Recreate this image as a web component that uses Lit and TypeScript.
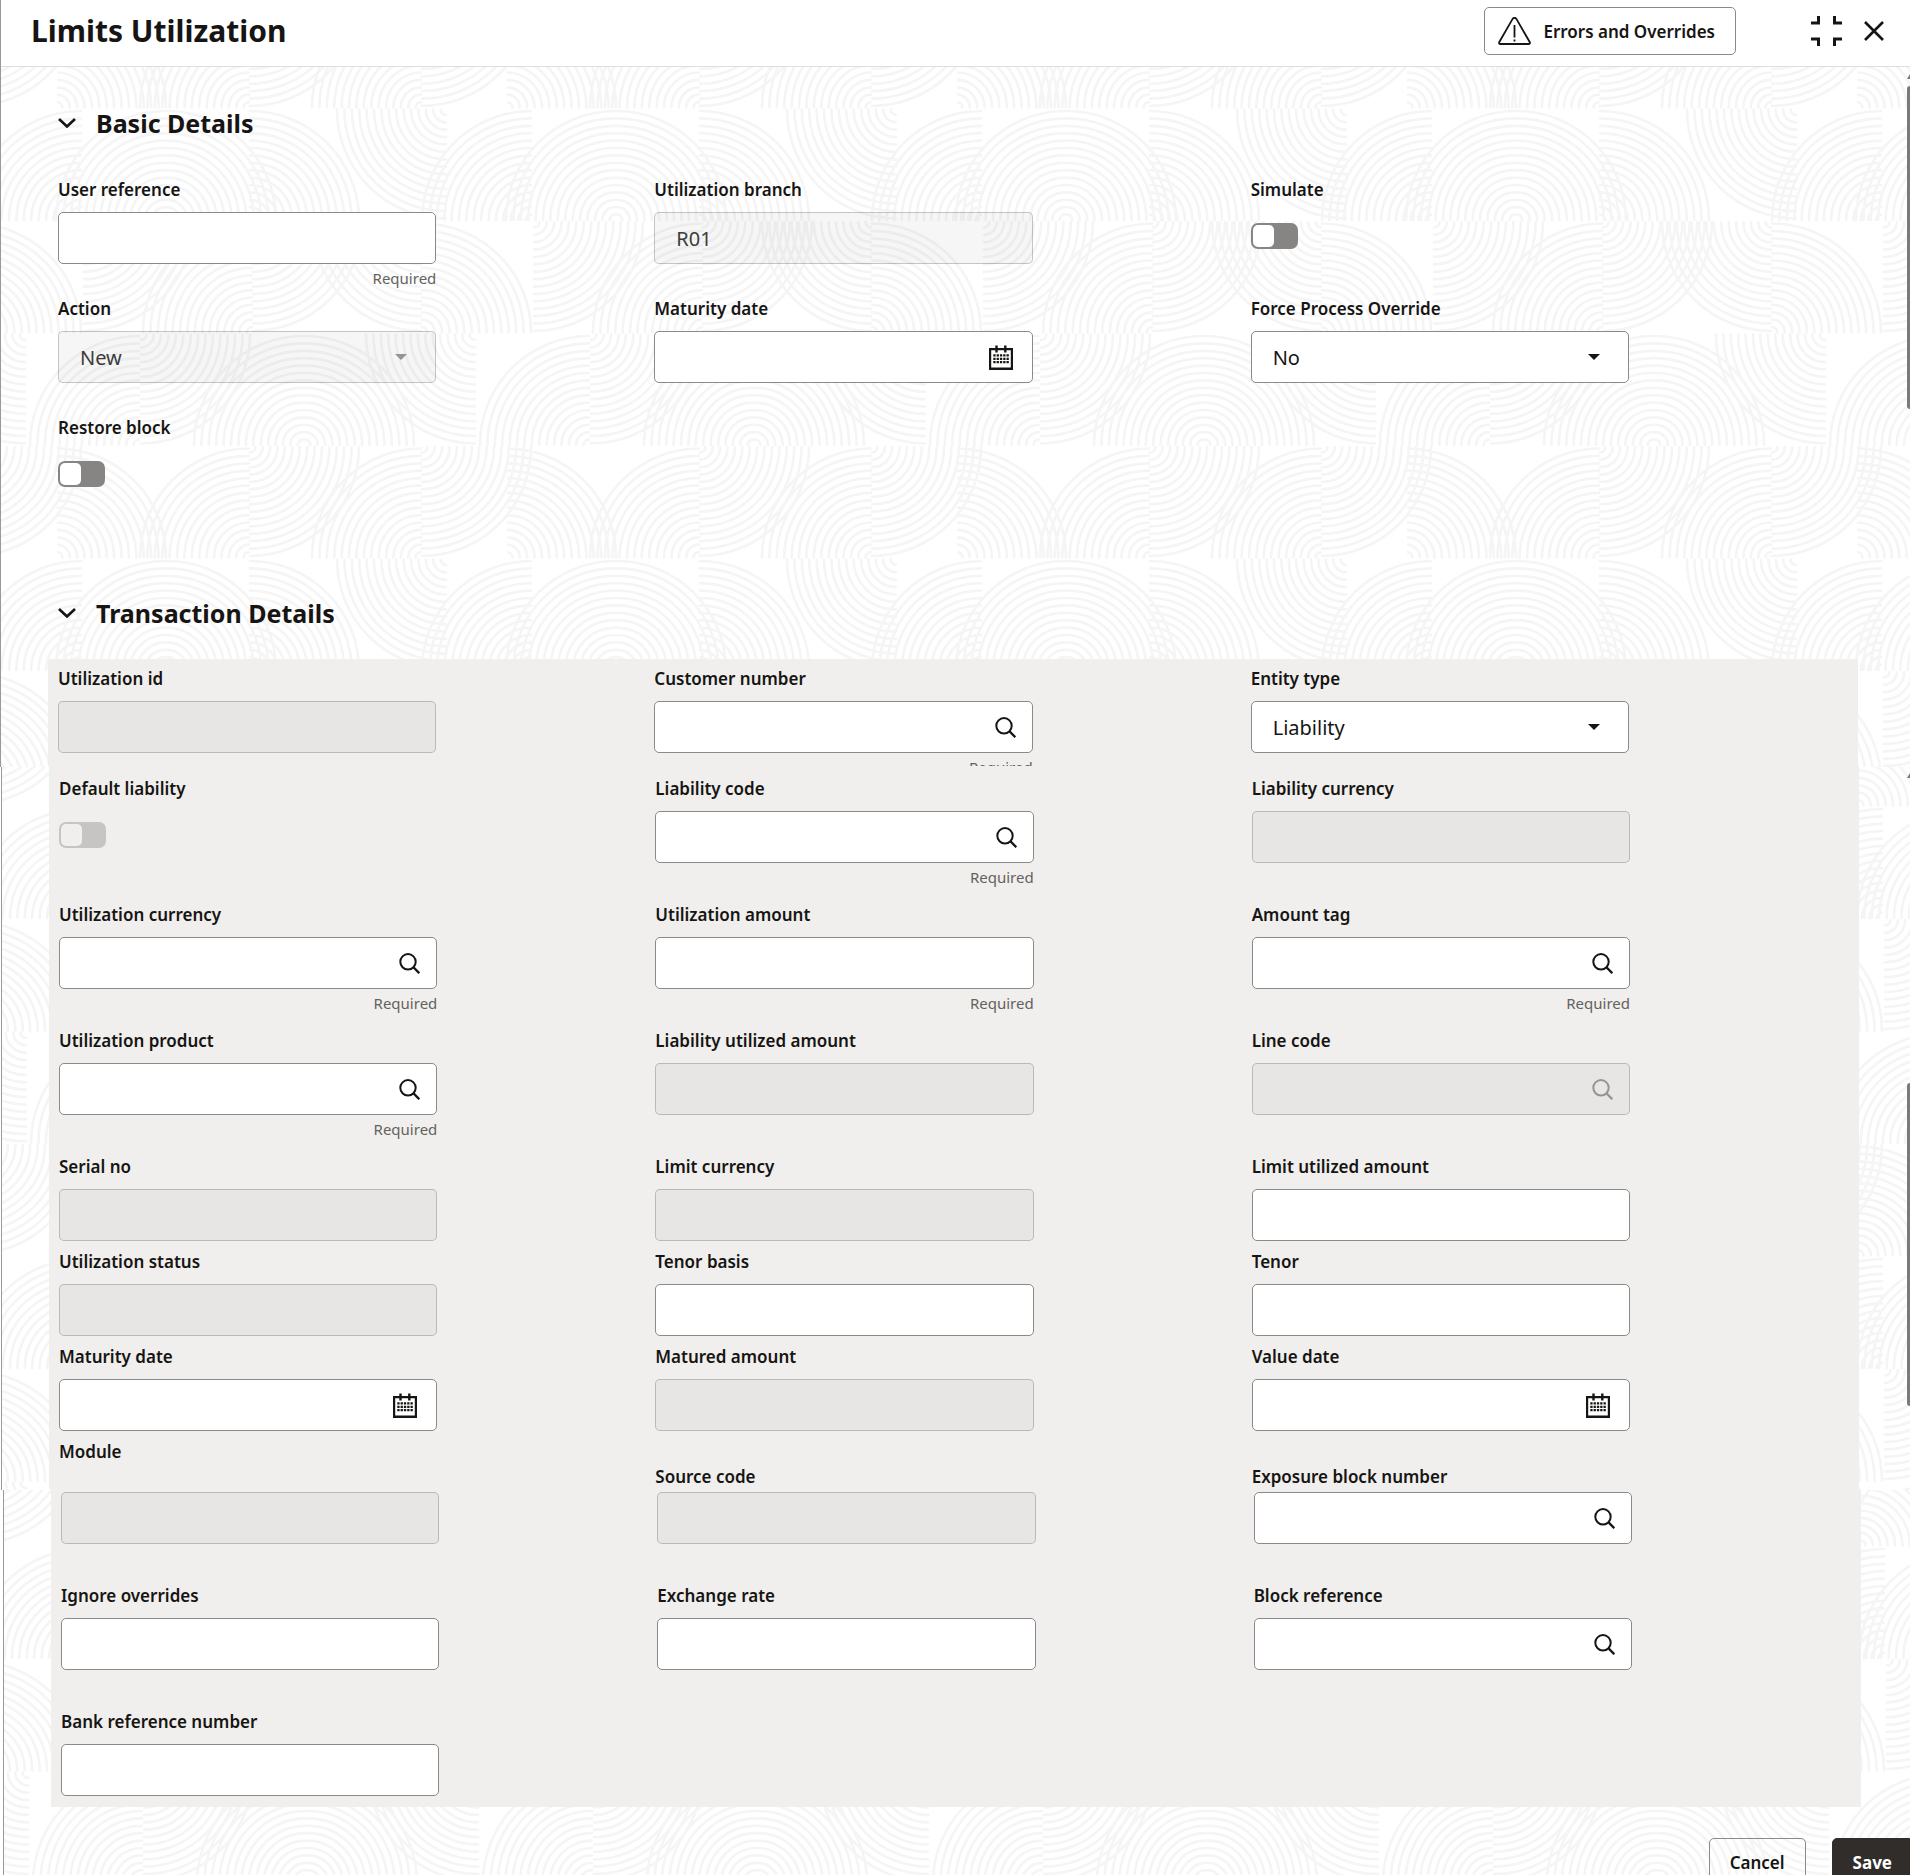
import { LitElement, html, svg, css, nothing } from "lit";
import { customElement } from "lit/decorators.js";
import { classMap } from "lit/directives/class-map.js";

type Kind = "text" | "search" | "date" | "select" | "switch";

interface Field {
  id: string;
  label: string;
  kind?: Kind;
  value?: string;
  disabled?: boolean;
  required?: boolean;
}

const basicRows: Field[][] = [
  [
    { id: "user-reference", label: "User reference", required: true },
    { id: "utilization-branch", label: "Utilization branch", value: "R01", disabled: true },
    { id: "simulate", label: "Simulate", kind: "switch" },
  ],
  [
    { id: "action", label: "Action", kind: "select", value: "New", disabled: true },
    { id: "basic-maturity-date", label: "Maturity date", kind: "date" },
    { id: "force-override", label: "Force Process Override", kind: "select", value: "No" },
  ],
  [{ id: "restore-block", label: "Restore block", kind: "switch" }],
];

const entityRow: Field[] = [
  { id: "utilization-id", label: "Utilization id", disabled: true },
  { id: "customer-number", label: "Customer number", kind: "search", required: true },
  { id: "entity-type", label: "Entity type", kind: "select", value: "Liability" },
];

const roomyRows: Field[][] = [
  [
    { id: "default-liability", label: "Default liability", kind: "switch", disabled: true },
    { id: "liability-code", label: "Liability code", kind: "search", required: true },
    { id: "liability-currency", label: "Liability currency", disabled: true },
  ],
  [
    { id: "utilization-currency", label: "Utilization currency", kind: "search", required: true },
    { id: "utilization-amount", label: "Utilization amount", required: true },
    { id: "amount-tag", label: "Amount tag", kind: "search", required: true },
  ],
  [
    { id: "utilization-product", label: "Utilization product", kind: "search", required: true },
    { id: "liability-utilized", label: "Liability utilized amount", disabled: true },
    { id: "line-code", label: "Line code", kind: "search", disabled: true },
  ],
];

const compactRows: Field[][] = [
  [
    { id: "serial-no", label: "Serial no", disabled: true },
    { id: "limit-currency", label: "Limit currency", disabled: true },
    { id: "limit-utilized", label: "Limit utilized amount" },
  ],
  [
    { id: "utilization-status", label: "Utilization status", disabled: true },
    { id: "tenor-basis", label: "Tenor basis" },
    { id: "tenor", label: "Tenor" },
  ],
  [
    { id: "maturity-date", label: "Maturity date", kind: "date" },
    { id: "matured-amount", label: "Matured amount", disabled: true },
    { id: "value-date", label: "Value date", kind: "date" },
  ],
];

const sourceRow: Field[] = [
  { id: "module", label: "Module", disabled: true },
  { id: "source-code", label: "Source code", disabled: true },
  { id: "exposure-block", label: "Exposure block number", kind: "search" },
];

const overrideRow: Field[] = [
  { id: "ignore-overrides", label: "Ignore overrides" },
  { id: "exchange-rate", label: "Exchange rate" },
  { id: "block-reference", label: "Block reference", kind: "search" },
];

const bankRow: Field[] = [{ id: "bank-reference", label: "Bank reference number" }];

/* Backdrop tile: quarter fans as [centre x, row, horizontal direction, vertical direction]. */
const TILE = 450;
const ROW = TILE / 4;
const fans: [number, number, number, number][] = [
  [0, 0, 1, -1],
  [192, 0, -1, -1],
  [193, 0, 1, 1],
  [364, 0, -1, -1],
  [365, 0, 1, 1],
  [24, 1, -1, -1],
  [108, 1, -1, -1],
  [110, 1, 1, -1],
  [193, 1, 1, -1],
  [389, 1, -1, 1],
  [27, 2, 1, 1],
  [195, 2, -1, -1],
  [196, 2, 1, 1],
  [364, 2, -1, 1],
  [365, 2, 1, -1],
  [82, 3, -1, -1],
  [84, 3, 1, 1],
  [246, 3, -1, -1],
  [248, 3, 1, -1],
  [418, 3, -1, 1],
];

function fanPath(cx: number, row: number, dx: number, dy: number): string {
  const cy = dy < 0 ? (row + 1) * ROW - 1 : row * ROW + 1;
  const sweep = dx * dy > 0 ? 1 : 0;
  let d = "";
  for (let i = 0; i < 15; i++) {
    const r = 109 - i * 7.4;
    d += `M${cx + dx * r} ${cy}A${r} ${r} 0 0 ${sweep} ${cx} ${cy + dy * r}`;
  }
  return d;
}

const tilePath = fans
  .flatMap(([x, row, dx, dy]) =>
    [x - TILE, x, x + TILE]
      .filter((c) => (dx > 0 ? c + 110 > 0 && c < TILE : c > 0 && c - 110 < TILE))
      .map((c) => fanPath(c, row, dx, dy)),
  )
  .join("");

const bands = [
  { id: "band-a", x: 57, y: -4, top: 0, edge: 0 },
  { id: "band-b", x: 58, y: 694, top: 767, edge: 1 },
  { id: "band-c", x: 60, y: 1434, top: 1490, edge: 3 },
];

const searchIcon = html`<svg class="icon icon--search" viewBox="0 0 21 21" aria-hidden="true">
  <circle cx="9" cy="8.8" r="7.7" fill="none" stroke="currentColor" stroke-width="2" />
  <path d="M14.2 14 20.3 20.2" stroke="currentColor" stroke-width="2.4" />
</svg>`;

const calendarIcon = html`<svg class="icon icon--date" viewBox="0 0 24 25" aria-hidden="true">
  <path fill="currentColor" fill-rule="evenodd" d="M0 3H24V25H0ZM2.2 5.2V22.4H21.8V5.2Z" />
  <path d="M7.5 0.5V7.5M16.3 0.5V7.5" stroke="currentColor" stroke-width="2.4" />
  <path
    d="M4.3 10.4H20M4.3 13.8H20M4.3 17.2H20"
    stroke="currentColor"
    stroke-width="2.3"
    stroke-dasharray="2.3 1"
  />
</svg>`;

const caretIcon = html`<svg class="icon icon--caret" viewBox="0 0 12 6" aria-hidden="true">
  <path d="M0 0H12L6 6Z" fill="currentColor" />
</svg>`;

const chevronIcon = html`<svg class="chevron" viewBox="0 0 18 10" aria-hidden="true">
  <path d="M1 1 9 8.5 17 1" fill="none" stroke="currentColor" stroke-width="2.6" />
</svg>`;

@customElement("app-root")
export class AppRoot extends LitElement {
  static styles = css`
    :host {
      display: block;
      position: relative;
      height: 100vh;
      overflow: hidden;
      background: #fff;
      color: #161513;
      font-family: "Noto Sans", "Open Sans", sans-serif;
      --edge: #8b8a88;
      --shade: rgba(22, 21, 19, 0.04);
    }
    * {
      box-sizing: border-box;
    }
    .backdrop {
      position: absolute;
      inset: 0;
      width: 100%;
      height: 100%;
    }
    .scroll {
      position: absolute;
      right: 0;
      display: flex;
      flex-direction: column;
      gap: 7px;
      width: 3px;
      overflow: hidden;
    }
    .scroll::before {
      content: "";
      width: 6px;
      height: 5px;
      background: #7b7a78;
      clip-path: polygon(50% 0, 100% 100%, 0 100%);
    }
    .scroll--upper {
      top: 74px;
    }
    .scroll--lower {
      top: 773px;
    }
    .thumb {
      height: 323px;
      border-radius: 3px 0 0 3px;
      background: #7b7a78;
    }
    .scroll--lower .thumb {
      margin-top: 298px;
    }
    .header {
      position: relative;
      display: flex;
      align-items: center;
      height: 67px;
      padding: 0 26px 4px 30px;
      margin-left: 1px;
      background: #fff;
      border-bottom: 1px solid #dfdedd;
    }
    h1,
    h2 {
      margin: 0;
      font-weight: 700;
    }
    h1 {
      flex: 1;
      font-size: 30px;
      line-height: 40px;
    }
    button {
      font: inherit;
      color: inherit;
      background: none;
      border: 0;
      padding: 0;
      cursor: pointer;
    }
    .outlined,
    .solid {
      height: 48px;
      border: 1px solid var(--edge);
      border-radius: 5px;
      font-size: 17px;
      font-weight: 600;
    }
    .errors {
      display: flex;
      align-items: center;
      gap: 12px;
      padding: 0 20px 0 13px;
    }
    .warning {
      width: 33px;
      height: 28px;
    }
    .window {
      display: flex;
      align-items: center;
      gap: 22px;
      margin-left: 75px;
    }
    .window button {
      display: flex;
    }
    .shrink {
      width: 31px;
      height: 30px;
    }
    .close {
      width: 20px;
      height: 20px;
    }
    .body {
      position: relative;
    }
    .toggle-heading {
      display: flex;
      align-items: center;
      gap: 20px;
      margin-left: 58px;
      font-weight: 700;
      font-size: 25px;
      line-height: 36px;
    }
    .heading--basic {
      padding-top: 38px;
      padding-bottom: 37px;
    }
    .heading--transaction {
      padding-top: 60px;
      padding-bottom: 28px;
    }
    .chevron {
      width: 18px;
      height: 10px;
    }
    .group {
      margin: 0 52px 0 48px;
      padding: 0 11px 0 10px;
    }
    .panel {
      background: #f0efed;
    }
    .panel--top {
      padding-top: 8px;
      height: 107px;
      overflow: hidden;
    }
    .panel--middle {
      padding-top: 11px;
      margin: 0 51px 0 49px;
    }
    .panel--bottom {
      padding-top: 3px;
      padding-bottom: 11px;
      margin: 0 49px 0 51px;
    }
    .row {
      display: grid;
      grid-template-columns: repeat(3, 1fr);
      min-height: 95px;
    }
    .row--basic {
      min-height: 119px;
    }
    .row--roomy {
      min-height: 126px;
    }
    .row--labels {
      min-height: 49px;
    }
    .row--labels .label:not(:first-child) {
      align-self: end;
    }
    .row--controls {
      min-height: 92px;
    }
    .row--last {
      min-height: 86px;
    }
    .field {
      padding-right: 218px;
    }
    .label {
      display: block;
      font-size: 17px;
      font-weight: 600;
      line-height: 24px;
      white-space: nowrap;
    }
    .field .label {
      margin-bottom: 10px;
    }
    .control {
      display: grid;
      align-items: center;
    }
    .control > * {
      grid-area: 1 / 1;
    }
    .input {
      width: 100%;
      height: 52px;
      margin: 0;
      padding: 0 21px;
      border: 1px solid var(--edge);
      border-radius: 5px;
      background: #fff;
      color: #161513;
      font: inherit;
      font-size: 20px;
      appearance: none;
      outline: none;
    }
    .input:disabled {
      border-color: rgba(22, 21, 19, 0.22);
      background: var(--shade);
      color: #3d3c3a;
      opacity: 1;
    }
    .icon {
      justify-self: end;
      pointer-events: none;
    }
    .icon--search {
      width: 21px;
      height: 21px;
      margin-right: 17px;
    }
    .icon--date {
      width: 24px;
      height: 25px;
      margin-right: 20px;
    }
    .icon--caret {
      width: 12px;
      height: 6px;
      margin-right: 29px;
    }
    .control--disabled .icon {
      color: #959492;
    }
    .hint {
      margin-top: 3px;
      font-size: 15px;
      line-height: 23px;
      color: #64625f;
      text-align: right;
    }
    .switch {
      display: flex;
      align-items: center;
      width: 47px;
      height: 26px;
      margin: 21px 0 0;
      padding: 2px;
      appearance: none;
      border-radius: 7px;
      background: #868583;
    }
    .switch::before {
      content: "";
      width: 21px;
      height: 22px;
      border-radius: 5px;
      background: #fff;
    }
    .switch:disabled {
      background: #c6c5c3;
    }
    .switch:disabled::before {
      background: #f0efed;
    }
    .footer {
      position: relative;
      display: flex;
      justify-content: flex-end;
      gap: 26px;
      padding-top: 31px;
    }
    .cancel {
      padding: 0 20px;
    }
    .solid {
      padding: 0 17px 0 20px;
      background: #312d2a;
      border-color: #312d2a;
      border-radius: 5px 0 0 5px;
      color: #fff;
      font-weight: 700;
    }
  `;

  private backdrop() {
    return html`<svg class="backdrop" aria-hidden="true">
      <defs>
        ${bands.map(
          (b) => svg`<pattern id=${b.id} patternUnits="userSpaceOnUse" x=${b.x} y=${b.y} width=${TILE} height=${TILE}>
            <path d=${tilePath} fill="none" stroke="#f5f5f5" stroke-width="2.7" stroke-linecap="round" />
          </pattern>`,
        )}
      </defs>
      ${bands.map(
        (b) => svg`
          <rect x="0" y=${b.top} width="100%" height="100%" fill="#fff" />
          <rect x=${b.edge} y=${b.top} width="100%" height="100%" fill=${`url(#${b.id})`} />
          <rect x=${b.edge} y=${b.top} width="1" height="100%" fill="#9a9998" />`,
      )}
    </svg>`;
  }

  private control(f: Field) {
    const disabled = !!f.disabled;
    if (f.kind === "switch") {
      return html`<input class="switch" type="checkbox" role="switch" id=${f.id} ?disabled=${disabled} />`;
    }
    const icon =
      f.kind === "search" ? searchIcon : f.kind === "date" ? calendarIcon : f.kind === "select" ? caretIcon : nothing;
    return html`<div class=${classMap({ control: true, "control--disabled": disabled })}>
      ${f.kind === "select"
        ? html`<select class="input" id=${f.id} ?disabled=${disabled}>
            <option>${f.value}</option>
          </select>`
        : html`<input
            class="input"
            type="text"
            id=${f.id}
            .value=${f.value ?? ""}
            ?disabled=${disabled}
            ?required=${!!f.required}
          />`}
      ${icon}
    </div>`;
  }

  private label(f: Field) {
    return html`<label class="label" for=${f.id}>${f.label}</label>`;
  }

  private row(fields: Field[], variant = "") {
    return html`<div class="row ${variant}">
      ${fields.map(
        (f) => html`<div class="field">
          ${this.label(f)} ${this.control(f)} ${f.required ? html`<div class="hint">Required</div>` : nothing}
        </div>`,
      )}
    </div>`;
  }

  render() {
    return html`
      ${this.backdrop()}
      <header class="header">
        <h1>Limits Utilization</h1>
        <button class="outlined errors" type="button">
          <svg class="warning" viewBox="0 0 33 28" aria-hidden="true" fill="none" stroke="currentColor">
            <path
              d="M14.6 1.9Q16.5 -.4 18.4 1.9L31.8 25.2Q32.4 27 30.6 27H2.4Q.6 27 1.2 25.2Z"
              stroke-width="1.8"
            />
            <path d="M16.5 8V20.5M16.5 22.5V24.5" stroke-width="1.8" />
          </svg>
          Errors and Overrides
        </button>
        <div class="window">
          <button type="button" aria-label="Collapse">
            <svg class="shrink" viewBox="0 0 31 30" aria-hidden="true" fill="none" stroke="currentColor" stroke-width="3">
              <path d="M0 7H7.5V0M23.5 0V7H31M0 23H7.5V30M23.5 30V23H31" />
            </svg>
          </button>
          <button type="button" aria-label="Close">
            <svg class="close" viewBox="0 0 20 20" aria-hidden="true" stroke="currentColor" stroke-width="2.6">
              <path d="M1 1 19 19M19 1 1 19" />
            </svg>
          </button>
        </div>
      </header>
      <main class="body">
        <h2 class="heading--basic">
          <button class="toggle-heading" type="button" aria-expanded="true">${chevronIcon} Basic Details</button>
        </h2>
        <section class="group">${basicRows.map((r) => this.row(r, "row--basic"))}</section>
        <h2 class="heading--transaction">
          <button class="toggle-heading" type="button" aria-expanded="true">${chevronIcon} Transaction Details</button>
        </h2>
        <section class="group panel panel--top">${this.row(entityRow)}</section>
        <section class="group panel panel--middle">
          ${roomyRows.map((r) => this.row(r, "row--roomy"))} ${compactRows.map((r) => this.row(r))}
          <div class="row row--labels">${sourceRow.map((f) => this.label(f))}</div>
        </section>
        <section class="group panel panel--bottom">
          <div class="row row--controls">
            ${sourceRow.map((f) => html`<div class="field">${this.control(f)}</div>`)}
          </div>
          ${this.row(overrideRow, "row--roomy")} ${this.row(bankRow, "row--last")}
        </section>
      </main>
      <footer class="footer">
        <button class="outlined cancel" type="button">Cancel</button>
        <button class="solid" type="button">Save</button>
      </footer>
      <div class="scroll scroll--upper"><div class="thumb"></div></div>
      <div class="scroll scroll--lower"><div class="thumb"></div></div>
    `;
  }
}
